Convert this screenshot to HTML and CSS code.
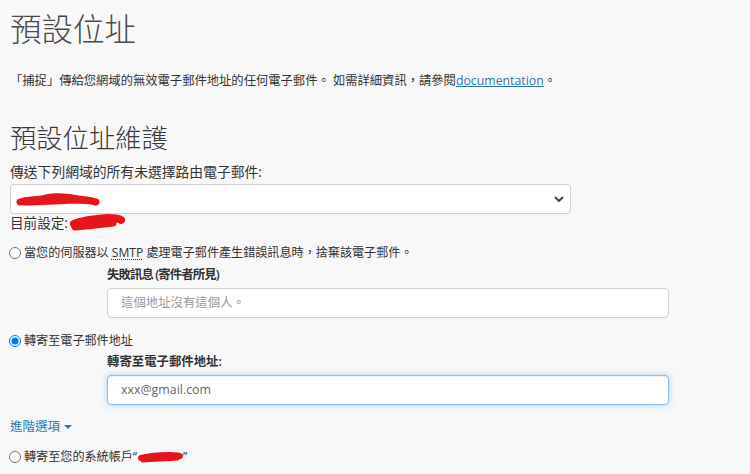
FILE: index.html
```html
<!DOCTYPE html>
<html lang="zh-Hant">
<head>
<meta charset="utf-8">
<title>預設位址</title>
<link rel="stylesheet" href="styles.css">
</head>
<body>
<div class="page">
  <h1 class="title">預設位址</h1>
  <p class="desc">「捕捉」傳給您網域的無效電子郵件地址的任何電子郵件。 如需詳細資訊，請參閱<a href="#" class="link">documentation</a>。</p>

  <h2 class="subtitle">預設位址維護</h2>
  <div class="field-label">傳送下列網域的所有未選擇路由電子郵件:</div>
  <div class="select">
    <svg class="redact redact-select" viewBox="0 0 84 16" width="84" height="16"><path d="M4 10 C14 7 24 8 34 6 C44 4 54 5 62 7 C70 8 76 8 80 10" stroke="#e8141b" stroke-width="7" fill="none" stroke-linecap="round"/><path d="M8 11 C24 11 40 10 58 9 C66 9 72 10 76 10" stroke="#e8141b" stroke-width="5" fill="none" stroke-linecap="round"/><path d="M28 5 C34 3 42 3 48 4" stroke="#e8141b" stroke-width="4" fill="none" stroke-linecap="round"/></svg>
    <svg class="chev" viewBox="0 0 10 6" width="10" height="6"><path d="M1 1 L5 5 L9 1" stroke="#444" stroke-width="2" fill="none"/></svg>
  </div>
  <div class="current">目前設定: <svg class="redact" viewBox="0 0 56 18" width="56" height="18"><path d="M5 10 C14 6 26 5 38 4 C46 4 51 5 52 6" stroke="#e8141b" stroke-width="8" fill="none" stroke-linecap="round"/><path d="M6 13 C16 12 28 11 44 9" stroke="#e8141b" stroke-width="7" fill="none" stroke-linecap="round"/></svg></div>

  <label class="radio r1"><input type="radio" name="opt"><span>當您的伺服器以 <abbr class="abbr">SMTP</abbr> 處理電子郵件產生錯誤訊息時，捨棄該電子郵件。</span></label>
  <div class="sub">
    <div class="sub-label tight">失敗訊息 (寄件者所見)</div>
    <div class="input placeholder">這個地址沒有這個人。</div>
  </div>

  <label class="radio r2"><input type="radio" name="opt" checked><span>轉寄至電子郵件地址</span></label>
  <div class="sub">
    <div class="sub-label second">轉寄至電子郵件地址:</div>
    <div class="input focus">xxx@gmail.com</div>
  </div>

  <div class="advanced">進階選項 <span class="caret"></span></div>

  <label class="radio r3"><input type="radio" name="opt"><span>轉寄至您的系統帳戶“<svg class="redact" viewBox="0 0 46 14" width="46" height="14"><path d="M4 8 C12 6 22 5 32 5 C38 5 42 5 43 6" stroke="#e8141b" stroke-width="6" fill="none" stroke-linecap="round"/><path d="M6 10 C18 9 30 9 40 8" stroke="#e8141b" stroke-width="5" fill="none" stroke-linecap="round"/></svg>”</span></label>
</div>
</body>
</html>
```

FILE: styles.css
```css
html, body {
  margin: 0;
  padding: 0;
  background: #f8f8f8;
}
body {
  font-family: "Open Sans", "Noto Sans CJK TC", sans-serif;
  color: #333;
}
.page {
  padding: 11px 10px 0 10px;
}
.title {
  margin: 0;
  font-size: 31.5px;
  line-height: 36px;
  font-weight: 300;
  color: #4a4a4a;
}
.desc {
  margin: 25px 0 0 0;
  font-size: 12.3px;
  line-height: 18px;
}
.link {
  color: #2f74b5;
  text-decoration: underline;
}
.subtitle {
  margin: 32px 0 0 0;
  font-size: 26.3px;
  line-height: 32px;
  font-weight: 300;
  color: #3a3a3a;
}
.field-label {
  margin-top: 9px;
  font-size: 13.8px;
  line-height: 18px;
}
.select {
  margin-top: 3px;
  width: 561px;
  height: 30px;
  box-sizing: border-box;
  border: 1px solid #d0d0d0;
  border-radius: 4px;
  background: #fff;
  display: flex;
  align-items: center;
  justify-content: space-between;
  padding: 0 6px 0 5px;
}
.redact {
  display: inline-block;
  vertical-align: middle;
}
.redact-select {
  margin-top: 2px;
}
.current {
  font-size: 13.6px;
  line-height: 16px;
  display: flex;
  align-items: center;
  gap: 1px;
}
.radio {
  display: flex;
  align-items: center;
  font-size: 12.1px;
  line-height: 18px;
}
.radio input {
  margin: 0 3px 0 -1px;
  width: 12px;
  height: 12px;
}
.r1 { margin-top: 12px; }
.r2 { margin-top: 14px; }
.r3 { margin-top: 12px; }
.r3 span {
  display: inline-flex;
  align-items: center;
}
.abbr {
  text-decoration: underline dotted;
  text-underline-offset: 2px;
}
.sub {
  padding-left: 97px;
}
.sub-label {
  margin-top: 4px;
  font-size: 12.4px;
  line-height: 18px;
  font-weight: 600;
}
.sub-label.tight {
  letter-spacing: -0.9px;
}
.sub-label.second {
  margin-top: 3px;
}
.input {
  margin-top: 4px;
  width: 562px;
  height: 30px;
  box-sizing: border-box;
  border: 1px solid #d0d0d0;
  border-radius: 4px;
  background: #fff;
  padding: 0 13px;
  font-size: 12.4px;
  line-height: 28px;
  color: #777;
}
.placeholder {
  color: #999;
}
.focus {
  border-color: #8fbde3;
  box-shadow: inset 0 1px 1px rgba(0,0,0,.06), 0 0 6px rgba(102,175,233,.55);
  color: #666;
}
.advanced {
  margin-top: 13px;
  font-size: 12.5px;
  line-height: 18px;
  color: #2f74b5;
  display: flex;
  align-items: center;
  gap: 2px;
}
.caret {
  display: inline-block;
  width: 0;
  height: 0;
  border-left: 4px solid transparent;
  border-right: 4px solid transparent;
  border-top: 4px solid #2f74b5;
  margin-left: 2px;
}
```
